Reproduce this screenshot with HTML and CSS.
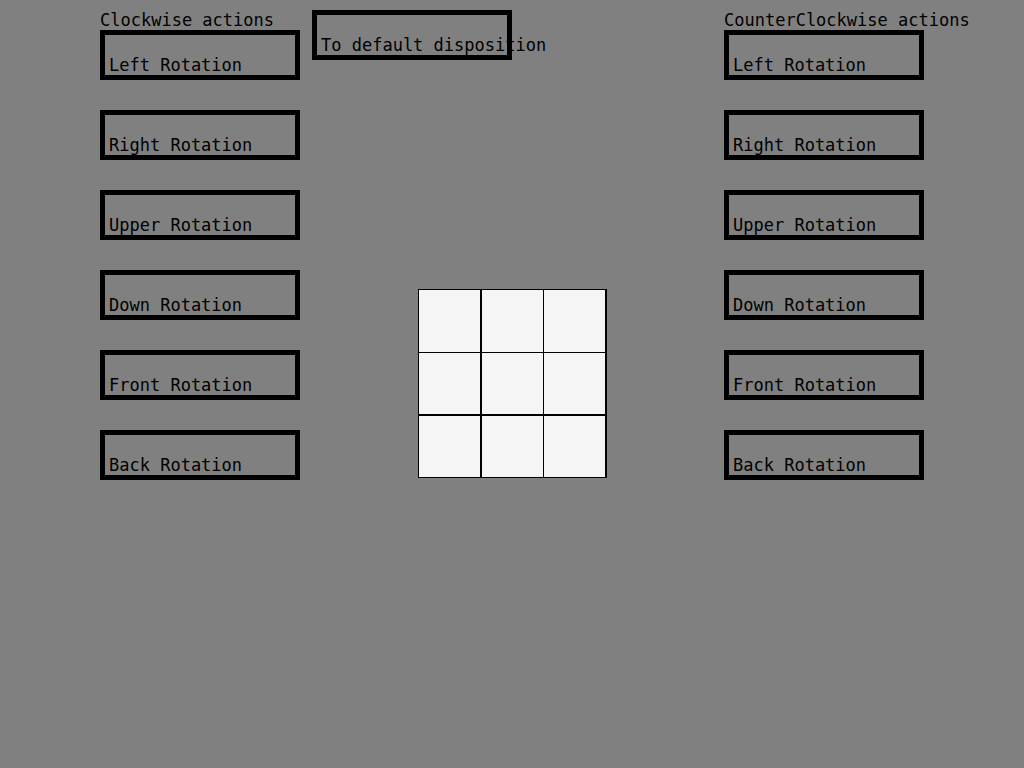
FILE: index.html
```html
<!DOCTYPE html>
<html>
<head>
<meta charset="utf-8">
<link rel="stylesheet" href="styles.css">
</head>
<body>
<div class="page">
  <div class="col side">
    <div class="title">Clockwise actions</div>
    <div class="btn">Left Rotation</div>
    <div class="btn">Right Rotation</div>
    <div class="btn">Upper Rotation</div>
    <div class="btn">Down Rotation</div>
    <div class="btn">Front Rotation</div>
    <div class="btn">Back Rotation</div>
  </div>
  <div class="col middle">
    <div class="btn">To default disposition</div>
    <div class="grid">
      <div class="cell"></div><div class="cell mid-col"></div><div class="cell"></div>
      <div class="cell mid-row"></div><div class="cell mid-col mid-row"></div><div class="cell mid-row"></div>
      <div class="cell"></div><div class="cell mid-col"></div><div class="cell"></div>
    </div>
  </div>
  <div class="col side">
    <div class="title">CounterClockwise actions</div>
    <div class="btn">Left Rotation</div>
    <div class="btn">Right Rotation</div>
    <div class="btn">Upper Rotation</div>
    <div class="btn">Down Rotation</div>
    <div class="btn">Front Rotation</div>
    <div class="btn">Back Rotation</div>
  </div>
</div>
</body>
</html>
```
FILE: styles.css
```css
html, body {
  margin: 0;
  padding: 0;
  background: #808080;
}
body {
  width: 1024px;
  height: 768px;
  font-family: "DejaVu Sans Mono", monospace;
  font-size: 17px;
  color: #000;
}
.page {
  display: flex;
  padding: 10px 0 0 100px;
}
.col {
  display: flex;
  flex-direction: column;
}
.side {
  width: 200px;
}
.middle {
  width: 412px;
  margin-left: 12px;
}
.title {
  height: 20px;
  line-height: 20px;
  white-space: nowrap;
}
.btn {
  box-sizing: border-box;
  width: 200px;
  height: 50px;
  border: 5px solid #000;
  margin-bottom: 30px;
  display: flex;
  align-items: flex-end;
  padding: 0 4px 1px 4px;
  line-height: 17px;
  white-space: nowrap;
}
.grid {
  margin-left: 106px;
  margin-top: 199px;
  width: 189px;
  height: 189px;
  box-sizing: border-box;
  display: grid;
  grid-template-columns: 61px 62px 61px;
  grid-template-rows: 62px 62px 61px;
  gap: 1px;
  padding: 1px 2px 1px 1px;
  background: #000;
}
.cell {
  background: #f5f5f5;
}
.mid-col {
  margin-left: 1px;
}
.mid-row {
  margin-bottom: 1px;
}
```
